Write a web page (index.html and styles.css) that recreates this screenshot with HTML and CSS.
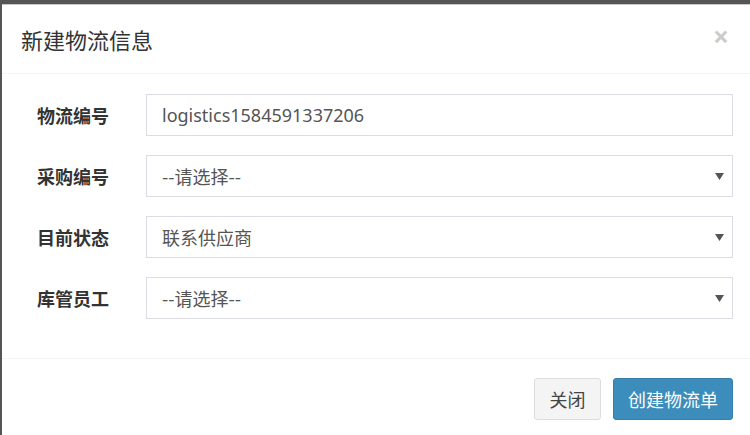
FILE: index.html
```html
<!DOCTYPE html>
<html lang="zh">
<head>
<meta charset="utf-8">
<link rel="stylesheet" href="styles.css">
</head>
<body>
<div class="modal">
  <div class="modal-header">
    <h4 class="modal-title">新建物流信息</h4>
    <span class="close">×</span>
  </div>
  <div class="modal-body">
    <div class="form-row">
      <label class="label">物流编号</label>
      <div class="control">logistics1584591337206</div>
    </div>
    <div class="form-row">
      <label class="label">采购编号</label>
      <div class="control select"><span>--请选择--</span><svg class="caret" width="9" height="7" viewBox="0 0 9 7"><path d="M0 0H9L4.5 7Z" fill="#555"/></svg></div>
    </div>
    <div class="form-row">
      <label class="label">目前状态</label>
      <div class="control select"><span>联系供应商</span><svg class="caret" width="9" height="7" viewBox="0 0 9 7"><path d="M0 0H9L4.5 7Z" fill="#555"/></svg></div>
    </div>
    <div class="form-row">
      <label class="label">库管员工</label>
      <div class="control select"><span>--请选择--</span><svg class="caret" width="9" height="7" viewBox="0 0 9 7"><path d="M0 0H9L4.5 7Z" fill="#555"/></svg></div>
    </div>
  </div>
  <div class="modal-footer">
    <button class="btn btn-default">关闭</button>
    <button class="btn btn-primary">创建物流单</button>
  </div>
</div>
</body>
</html>
```
FILE: styles.css
```css
html, body {
  margin: 0;
  padding: 0;
}
body {
  background: #555555;
  padding: 4px 0 0 2px;
  height: 435px;
  box-sizing: border-box;
  overflow: hidden;
  font-family: "Noto Sans", "Noto Sans CJK SC", sans-serif;
}
.modal {
  background: #ffffff;
  border-top: 1px solid #c8c8c8;
  width: 748px;
  height: 440px;
}
.modal-header {
  display: flex;
  justify-content: space-between;
  align-items: center;
  height: 69px;
  box-sizing: border-box;
  padding: 0 21px 0 19px;
  border-bottom: 1px solid #f4f4f4;
}
.modal-title {
  margin: 0;
  font-size: 22px;
  font-weight: normal;
  color: #333333;
  font-family: "Noto Sans CJK SC", sans-serif;
}
.close {
  font-size: 28px;
  font-weight: bold;
  color: #000;
  opacity: 0.2;
  line-height: 1;
  margin-top: -6px;
}
.modal-body {
  padding: 20px 17px 20px 35px;
}
.form-row {
  display: flex;
  align-items: center;
  margin-bottom: 19px;
}
.label {
  width: 109px;
  font-size: 18px;
  font-weight: bold;
  color: #333333;
  font-family: "Noto Sans CJK SC", sans-serif;
}
.control {
  flex: 1;
  height: 42px;
  box-sizing: border-box;
  border: 1px solid #dcdde4;
  padding: 0 15px;
  display: flex;
  align-items: center;
  font-size: 18px;
  color: #555555;
}
.select {
  justify-content: space-between;
  font-family: "Noto Sans CJK SC", sans-serif;
  padding-right: 8px;
}
.caret {
  display: block;
}
.modal-footer {
  border-top: 1px solid #f4f4f4;
  padding: 19px 17px 0 0;
  display: flex;
  justify-content: flex-end;
  gap: 12px;
}
.btn {
  height: 42px;
  border-radius: 3px;
  font-size: 18px;
  font-family: "Noto Sans CJK SC", sans-serif;
  padding: 0;
  white-space: nowrap;
  cursor: pointer;
}
.btn-default {
  background: #f4f4f4;
  border: 1px solid #dddddd;
  color: #444444;
  width: 67px;
}
.btn-primary {
  background: #3c8dbc;
  border: 1px solid #367fa9;
  color: #ffffff;
  width: 120px;
}
```
